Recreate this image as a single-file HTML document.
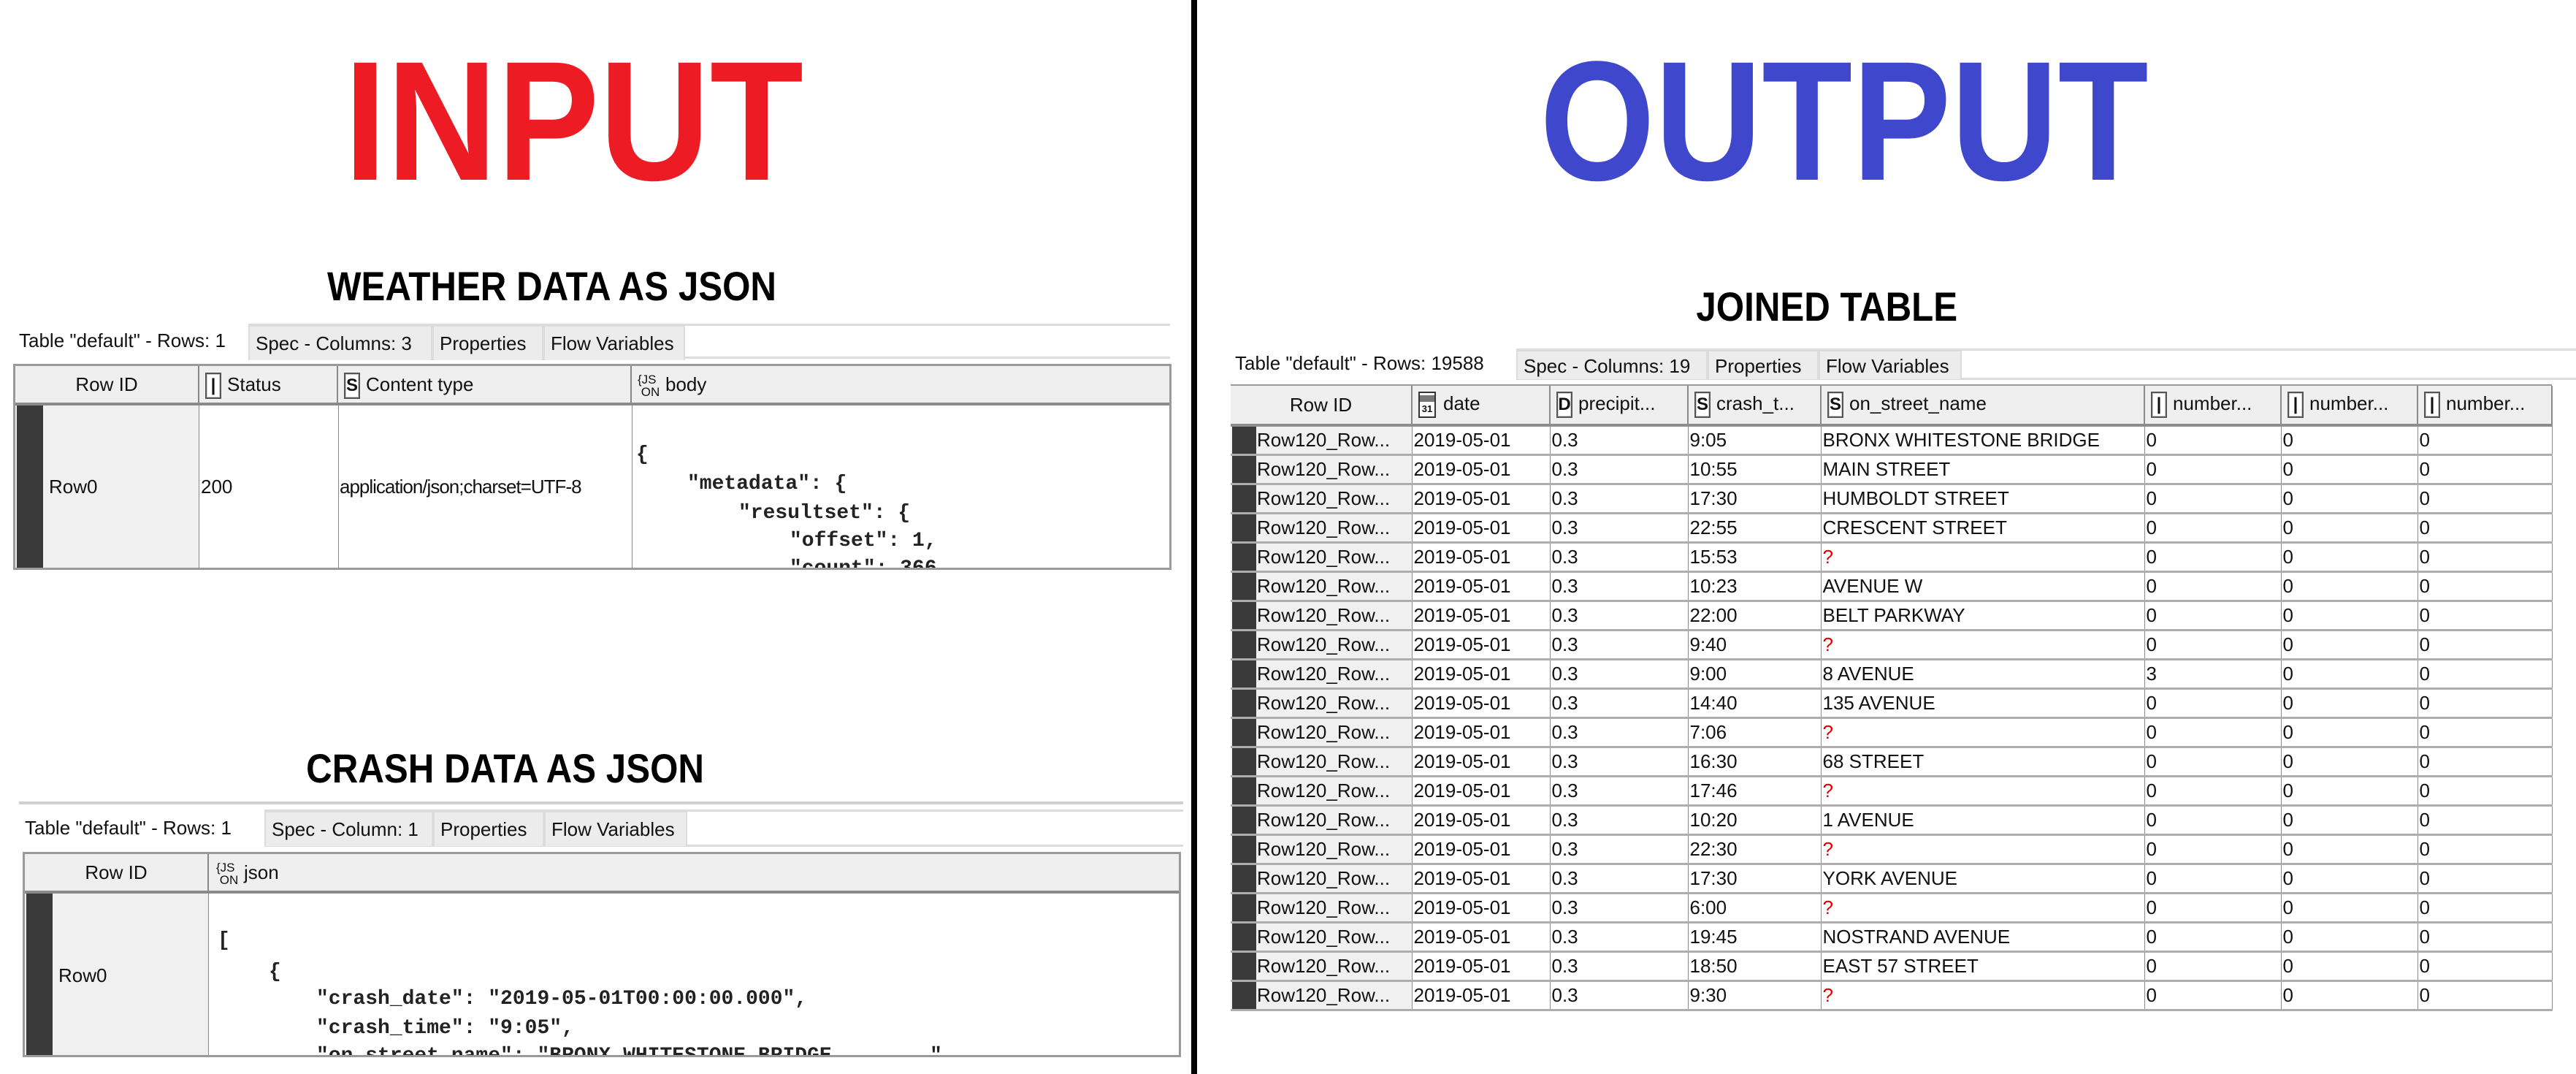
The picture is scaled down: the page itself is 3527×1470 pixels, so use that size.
<!DOCTYPE html>
<html><head><meta charset="utf-8">
<style>
*{margin:0;padding:0;box-sizing:border-box}
body{width:3527px;height:1470px;background:#fff;position:relative;overflow:hidden;font-family:"Liberation Sans",sans-serif;color:#111}
.a{position:absolute;white-space:nowrap}
.big{font-weight:bold;font-size:233px;line-height:233px;transform-origin:center top}
.ttl{font-weight:bold;font-size:56px;line-height:56px;color:#000}
.tab{position:absolute;height:48px;font-size:26px;line-height:46px;padding-left:8px;background:#ececec;border:2px solid #dcdcdc;border-bottom:none;white-space:nowrap}
.tab.on{background:#fff;border:none}
.frame{position:absolute;border:3px solid #9a9a9a;overflow:hidden;background:#fff}
.hdr{position:absolute;background:#efefef;border-right:2px solid #888;border-bottom:4px solid #8a8a8a;font-size:26px;white-space:nowrap}
.ico{display:inline-block;width:22px;height:36px;border:2px solid #555;background:#fff;font-weight:bold;font-size:24px;line-height:32px;text-align:center;vertical-align:middle;margin-right:8px;box-shadow:inset 0 0 0 1px #ccc}
.js{display:inline-block;font-size:17px;line-height:17px;vertical-align:middle;margin-right:6px;width:32px}
.mono{font-family:"Liberation Mono",monospace;font-weight:bold;font-size:28px;position:absolute;white-space:pre;color:#222}
table{border-collapse:collapse;table-layout:fixed;font-size:26px}
td{border-right:1px solid #8a8a8a;border-bottom:3px solid #adadad;height:40px;padding:0 0 0 2px;white-space:nowrap;overflow:hidden;vertical-align:middle;line-height:34px}
th{background:#efefef;border-right:2px solid #8a8a8a;border-bottom:4px solid #8d8d8d;height:54px;font-weight:normal;text-align:left;padding-left:8px;white-space:nowrap;overflow:hidden}
td.rid{position:relative;padding-left:36px;background:#f0f0f0}
td.rid:before{content:"";position:absolute;left:2px;top:0;bottom:0;width:33px;background:#3a3a3a}
.q{color:#e00000}
.cal{display:inline-block;width:24px;height:36px;border:2px solid #333;background:#fff;vertical-align:middle;margin-right:10px;position:relative;font-size:13px;font-weight:bold;text-align:center;line-height:44px}
.cal:before{content:"";position:absolute;left:0;right:0;top:3px;height:9px;background:#777}
</style></head><body>

<div class="a" style="left:1631px;top:0;width:8px;height:1470px;background:#000"></div>

<div class="a big" style="left:0;width:1570px;top:50px;text-align:center;color:#ed1c24"><span style="display:inline-block;transform:scaleX(0.9)">INPUT</span></div>
<div class="a big" style="left:1925px;width:1200px;top:50px;text-align:center;color:#3f48cc"><span style="display:inline-block;transform:scaleX(0.87)">OUTPUT</span></div>

<div class="a ttl" style="left:0;width:1510px;top:364px;text-align:center"><span style="display:inline-block;transform:scaleX(0.88)">WEATHER DATA AS JSON</span></div>
<div class="a ttl" style="left:0;width:1384px;top:1024px;text-align:center"><span style="display:inline-block;transform:scaleX(0.88)">CRASH DATA AS JSON</span></div>
<div class="a ttl" style="left:2000px;width:1002px;top:392px;text-align:center"><span style="display:inline-block;transform:scaleX(0.88)">JOINED TABLE</span></div>

<!-- ===== Table 1 ===== -->
<div class="a" style="left:340px;top:443px;width:1262px;height:3px;background:#dcdcdc"></div>
<div class="a" style="left:340px;top:488px;width:1262px;height:3px;background:#dcdcdc"></div>
<div class="tab on" style="left:18px;top:443px;width:322px">Table "default" - Rows: 1</div>
<div class="tab" style="left:340px;top:445px;width:252px">Spec - Columns: 3</div>
<div class="tab" style="left:592px;top:445px;width:152px">Properties</div>
<div class="tab" style="left:744px;top:445px;width:194px">Flow Variables</div>

<div class="frame" style="left:18px;top:498px;width:1586px;height:282px">
  <div class="hdr" style="left:0;top:0;width:252px;height:54px;text-align:center;line-height:50px">Row ID</div>
  <div class="hdr" style="left:252px;top:0;width:190px;height:54px;line-height:50px;padding-left:8px"><span class="ico">|</span>Status</div>
  <div class="hdr" style="left:442px;top:0;width:402px;height:54px;line-height:50px;padding-left:8px"><span class="ico">S</span>Content type</div>
  <div class="hdr" style="left:844px;top:0;width:742px;height:54px;line-height:50px;padding-left:8px;border-right:none"><span class="js">{JS<br>&nbsp;ON</span>body</div>
  <div class="a" style="left:0;top:54px;width:252px;height:230px;background:#f0f0f0;border-right:1px solid #888"></div>
  <div class="a" style="left:2px;top:54px;width:36px;height:230px;background:#3a3a3a"></div>
  <div class="a" style="left:442px;top:54px;width:1px;height:230px;background:#888"></div>
  <div class="a" style="left:844px;top:54px;width:1px;height:230px;background:#888"></div>
  <div class="a" style="left:46px;top:150px;font-size:26px">Row0</div>
  <div class="a" style="left:254px;top:150px;font-size:26px">200</div>
  <div class="a" style="left:444px;top:150px;font-size:26px;letter-spacing:-1px">application/json;charset=UTF-8</div>
  <div class="mono" style="left:850px;top:106px">{</div>
  <div class="mono" style="left:920px;top:146px">"metadata": {</div>
  <div class="mono" style="left:990px;top:186px">"resultset": {</div>
  <div class="mono" style="left:1060px;top:224px">"offset": 1,</div>
  <div class="mono" style="left:1060px;top:262px">"count": 366,</div>
</div>

<!-- ===== Table 2 ===== -->
<div class="a" style="left:26px;top:1097px;width:1594px;height:4px;background:#cfcfcf"></div>
<div class="a" style="left:362px;top:1108px;width:1258px;height:3px;background:#dcdcdc"></div>
<div class="a" style="left:362px;top:1156px;width:1258px;height:3px;background:#dcdcdc"></div>
<div class="tab on" style="left:26px;top:1108px;width:336px;line-height:50px">Table "default" - Rows: 1</div>
<div class="tab" style="left:362px;top:1110px;width:231px">Spec - Column: 1</div>
<div class="tab" style="left:593px;top:1110px;width:152px">Properties</div>
<div class="tab" style="left:745px;top:1110px;width:196px">Flow Variables</div>

<div class="frame" style="left:31px;top:1166px;width:1586px;height:281px">
  <div class="hdr" style="left:0;top:0;width:252px;height:54px;text-align:center;line-height:50px">Row ID</div>
  <div class="hdr" style="left:252px;top:0;width:1334px;height:54px;line-height:50px;padding-left:10px;border-right:none"><span class="js">{JS<br>&nbsp;ON</span>json</div>
  <div class="a" style="left:0;top:54px;width:252px;height:230px;background:#f0f0f0;border-right:1px solid #888"></div>
  <div class="a" style="left:2px;top:54px;width:36px;height:230px;background:#3a3a3a"></div>
  <div class="a" style="left:46px;top:151px;font-size:26px">Row0</div>
  <div class="mono" style="left:264px;top:103px">[</div>
  <div class="mono" style="left:334px;top:146px">{</div>
  <div class="mono" style="left:399px;top:183px">"crash_date": "2019-05-01T00:00:00.000",</div>
  <div class="mono" style="left:399px;top:223px">"crash_time": "9:05",</div>
  <div class="mono" style="left:399px;top:261px">"on_street_name": "BRONX WHITESTONE BRIDGE        ",</div>
</div>

<!-- ===== Table 3 ===== -->
<div class="a" style="left:2076px;top:477px;width:1451px;height:3px;background:#dcdcdc"></div>
<div class="a" style="left:2076px;top:517px;width:1451px;height:3px;background:#dcdcdc"></div>
<div class="tab on" style="left:1683px;top:477px;width:393px;line-height:40px;height:42px">Table "default" - Rows: 19588</div>
<div class="tab" style="left:2076px;top:479px;width:262px;height:40px;line-height:40px">Spec - Columns: 19</div>
<div class="tab" style="left:2338px;top:479px;width:152px;height:40px;line-height:40px">Properties</div>
<div class="tab" style="left:2490px;top:479px;width:196px;height:40px;line-height:40px">Flow Variables</div>

<div class="a" style="left:1685px;top:526px;width:1809px;height:2px;background:#9a9a9a"></div>
<table class="a" style="left:1685px;top:528px;width:1809px">
<colgroup><col style="width:248px"><col style="width:189px"><col style="width:189px"><col style="width:182px"><col style="width:443px"><col style="width:187px"><col style="width:187px"><col style="width:184px"></colgroup>
<tr><th style="text-align:center;padding-left:0">Row ID</th><th><span class="cal">31</span>date</th><th><span class="ico">D</span>precipit...</th><th><span class="ico">S</span>crash_t...</th><th><span class="ico">S</span>on_street_name</th><th><span class="ico">|</span>number...</th><th><span class="ico">|</span>number...</th><th><span class="ico">|</span>number...</th></tr>
<tr><td class="rid">Row120_Row...</td><td>2019-05-01</td><td>0.3</td><td>9:05</td><td>BRONX WHITESTONE BRIDGE</td><td>0</td><td>0</td><td>0</td></tr>
<tr><td class="rid">Row120_Row...</td><td>2019-05-01</td><td>0.3</td><td>10:55</td><td>MAIN STREET</td><td>0</td><td>0</td><td>0</td></tr>
<tr><td class="rid">Row120_Row...</td><td>2019-05-01</td><td>0.3</td><td>17:30</td><td>HUMBOLDT STREET</td><td>0</td><td>0</td><td>0</td></tr>
<tr><td class="rid">Row120_Row...</td><td>2019-05-01</td><td>0.3</td><td>22:55</td><td>CRESCENT STREET</td><td>0</td><td>0</td><td>0</td></tr>
<tr><td class="rid">Row120_Row...</td><td>2019-05-01</td><td>0.3</td><td>15:53</td><td class="q">?</td><td>0</td><td>0</td><td>0</td></tr>
<tr><td class="rid">Row120_Row...</td><td>2019-05-01</td><td>0.3</td><td>10:23</td><td>AVENUE W</td><td>0</td><td>0</td><td>0</td></tr>
<tr><td class="rid">Row120_Row...</td><td>2019-05-01</td><td>0.3</td><td>22:00</td><td>BELT PARKWAY</td><td>0</td><td>0</td><td>0</td></tr>
<tr><td class="rid">Row120_Row...</td><td>2019-05-01</td><td>0.3</td><td>9:40</td><td class="q">?</td><td>0</td><td>0</td><td>0</td></tr>
<tr><td class="rid">Row120_Row...</td><td>2019-05-01</td><td>0.3</td><td>9:00</td><td>8 AVENUE</td><td>3</td><td>0</td><td>0</td></tr>
<tr><td class="rid">Row120_Row...</td><td>2019-05-01</td><td>0.3</td><td>14:40</td><td>135 AVENUE</td><td>0</td><td>0</td><td>0</td></tr>
<tr><td class="rid">Row120_Row...</td><td>2019-05-01</td><td>0.3</td><td>7:06</td><td class="q">?</td><td>0</td><td>0</td><td>0</td></tr>
<tr><td class="rid">Row120_Row...</td><td>2019-05-01</td><td>0.3</td><td>16:30</td><td>68 STREET</td><td>0</td><td>0</td><td>0</td></tr>
<tr><td class="rid">Row120_Row...</td><td>2019-05-01</td><td>0.3</td><td>17:46</td><td class="q">?</td><td>0</td><td>0</td><td>0</td></tr>
<tr><td class="rid">Row120_Row...</td><td>2019-05-01</td><td>0.3</td><td>10:20</td><td>1 AVENUE</td><td>0</td><td>0</td><td>0</td></tr>
<tr><td class="rid">Row120_Row...</td><td>2019-05-01</td><td>0.3</td><td>22:30</td><td class="q">?</td><td>0</td><td>0</td><td>0</td></tr>
<tr><td class="rid">Row120_Row...</td><td>2019-05-01</td><td>0.3</td><td>17:30</td><td>YORK AVENUE</td><td>0</td><td>0</td><td>0</td></tr>
<tr><td class="rid">Row120_Row...</td><td>2019-05-01</td><td>0.3</td><td>6:00</td><td class="q">?</td><td>0</td><td>0</td><td>0</td></tr>
<tr><td class="rid">Row120_Row...</td><td>2019-05-01</td><td>0.3</td><td>19:45</td><td>NOSTRAND AVENUE</td><td>0</td><td>0</td><td>0</td></tr>
<tr><td class="rid">Row120_Row...</td><td>2019-05-01</td><td>0.3</td><td>18:50</td><td>EAST 57 STREET</td><td>0</td><td>0</td><td>0</td></tr>
<tr><td class="rid">Row120_Row...</td><td>2019-05-01</td><td>0.3</td><td>9:30</td><td class="q">?</td><td>0</td><td>0</td><td>0</td></tr>
</table>

</body></html>
